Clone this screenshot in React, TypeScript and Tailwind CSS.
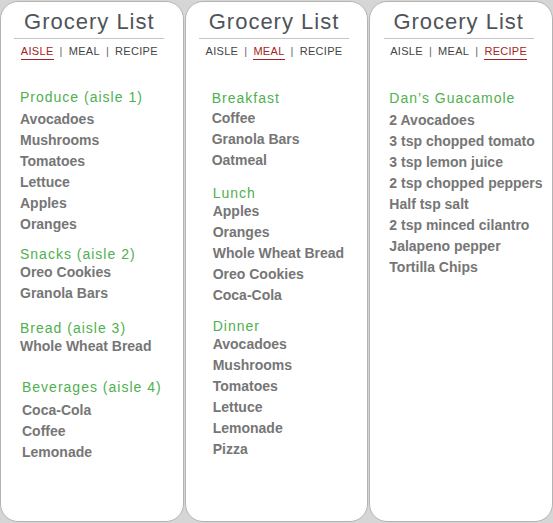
import React from "react";

type Line = { t: string; h?: boolean; c?: string };

const card1: Line[] = [
  { t: "Produce (aisle 1)", h: true },
  { t: "Avocadoes", c: "mt-[1px]" },
  { t: "Mushrooms" },
  { t: "Tomatoes" },
  { t: "Lettuce" },
  { t: "Apples" },
  { t: "Oranges" },
  { t: "Snacks (aisle 2)", h: true, c: "mt-[9px]" },
  { t: "Oreo Cookies", c: "-mt-[3px]" },
  { t: "Granola Bars" },
  { t: "Bread (aisle 3)", h: true, c: "mt-[14px]" },
  { t: "Whole Wheat Bread", c: "-mt-[3px]" },
  { t: "Beverages (aisle 4)", h: true, c: "mt-[20px] ml-[2px]" },
  { t: "Coca-Cola", c: "mt-[2px] ml-[2px]" },
  { t: "Coffee", c: "ml-[2px]" },
  { t: "Lemonade", c: "ml-[2px]" },
];

const card2: Line[] = [
  { t: "Breakfast", h: true },
  { t: "Coffee", c: "-mt-[1px]" },
  { t: "Granola Bars" },
  { t: "Oatmeal" },
  { t: "Lunch", h: true, c: "mt-[12px] ml-[1px]" },
  { t: "Apples", c: "-mt-[3px] ml-[1px]" },
  { t: "Oranges", c: "ml-[1px]" },
  { t: "Whole Wheat Bread", c: "ml-[1px]" },
  { t: "Oreo Cookies", c: "ml-[1px]" },
  { t: "Coca-Cola", c: "ml-[1px]" },
  { t: "Dinner", h: true, c: "mt-[10px] ml-[1px]" },
  { t: "Avocadoes", c: "-mt-[3px] ml-[1px]" },
  { t: "Mushrooms", c: "ml-[1px]" },
  { t: "Tomatoes", c: "ml-[1px]" },
  { t: "Lettuce", c: "ml-[1px]" },
  { t: "Lemonade", c: "ml-[1px]" },
  { t: "Pizza", c: "ml-[1px]" },
];

const card3: Line[] = [
  { t: "Dan\u2019s Guacamole", h: true },
  { t: "2 Avocadoes", c: "mt-[1px]" },
  { t: "3 tsp chopped tomato" },
  { t: "3 tsp lemon juice" },
  { t: "2 tsp chopped peppers" },
  { t: "Half tsp salt" },
  { t: "2 tsp minced cilantro" },
  { t: "Jalapeno pepper" },
  { t: "Tortilla Chips" },
];

const tabs = ["AISLE", "MEAL", "RECIPE"];

function Card({
  active,
  lines,
  listClass,
}: {
  active: number;
  lines: Line[];
  listClass: string;
}) {
  return (
    <div className="flex-1 h-[521px] rounded-[18px] border border-[#b3b3b3] bg-white overflow-hidden">
      <div className="flex flex-col items-center pt-[9px] pr-[5px]">
        <div
          className="h-[22px] leading-[22px] text-[22px] tracking-[1px] text-[#505459] whitespace-nowrap"
          style={{ fontFamily: '"Liberation Sans", Arial, sans-serif' }}
        >
          Grocery List
        </div>
        <div className="mt-[5px] h-px w-[150px] bg-[#c4c4c4]" />
        <div
          className="mt-[4px] flex items-start gap-[6px] text-[11px] leading-[16px] tracking-[0.3px] text-[#444]"
          style={{ fontFamily: '"Liberation Sans", Arial, sans-serif' }}
        >
          {tabs.map((tab, i) => (
            <React.Fragment key={tab}>
              {i > 0 && <span className="text-[#666]">|</span>}
              <span
                className={
                  i === active
                    ? "text-[#a52424] border-b border-[#a52424]"
                    : ""
                }
              >
                {tab}
              </span>
            </React.Fragment>
          ))}
        </div>
      </div>
      <div
        className={listClass}
        style={{ fontFamily: '"Liberation Sans", Arial, sans-serif' }}
      >
        {lines.map((l, i) => (
          <div
            key={i}
            className={
              (l.h
                ? "h-[21px] leading-[21px] text-[14px] tracking-[1px] text-[#4fb04f] whitespace-nowrap "
                : "h-[21px] leading-[21px] text-[14px] font-bold text-[#767676] whitespace-nowrap ") +
              (l.c ?? "")
            }
          >
            {l.t}
          </div>
        ))}
      </div>
    </div>
  );
}

export default function App() {
  return (
    <div className="w-[553px] h-[523px] bg-[#d6d6d6] pt-[1px] flex gap-[1px]">
      <Card active={0} lines={card1} listClass="mt-[27px] pl-[19px]" />
      <Card active={1} lines={card2} listClass="mt-[28px] pl-[26px]" />
      <Card active={2} lines={card3} listClass="mt-[28px] pl-[19px]" />
    </div>
  );
}
